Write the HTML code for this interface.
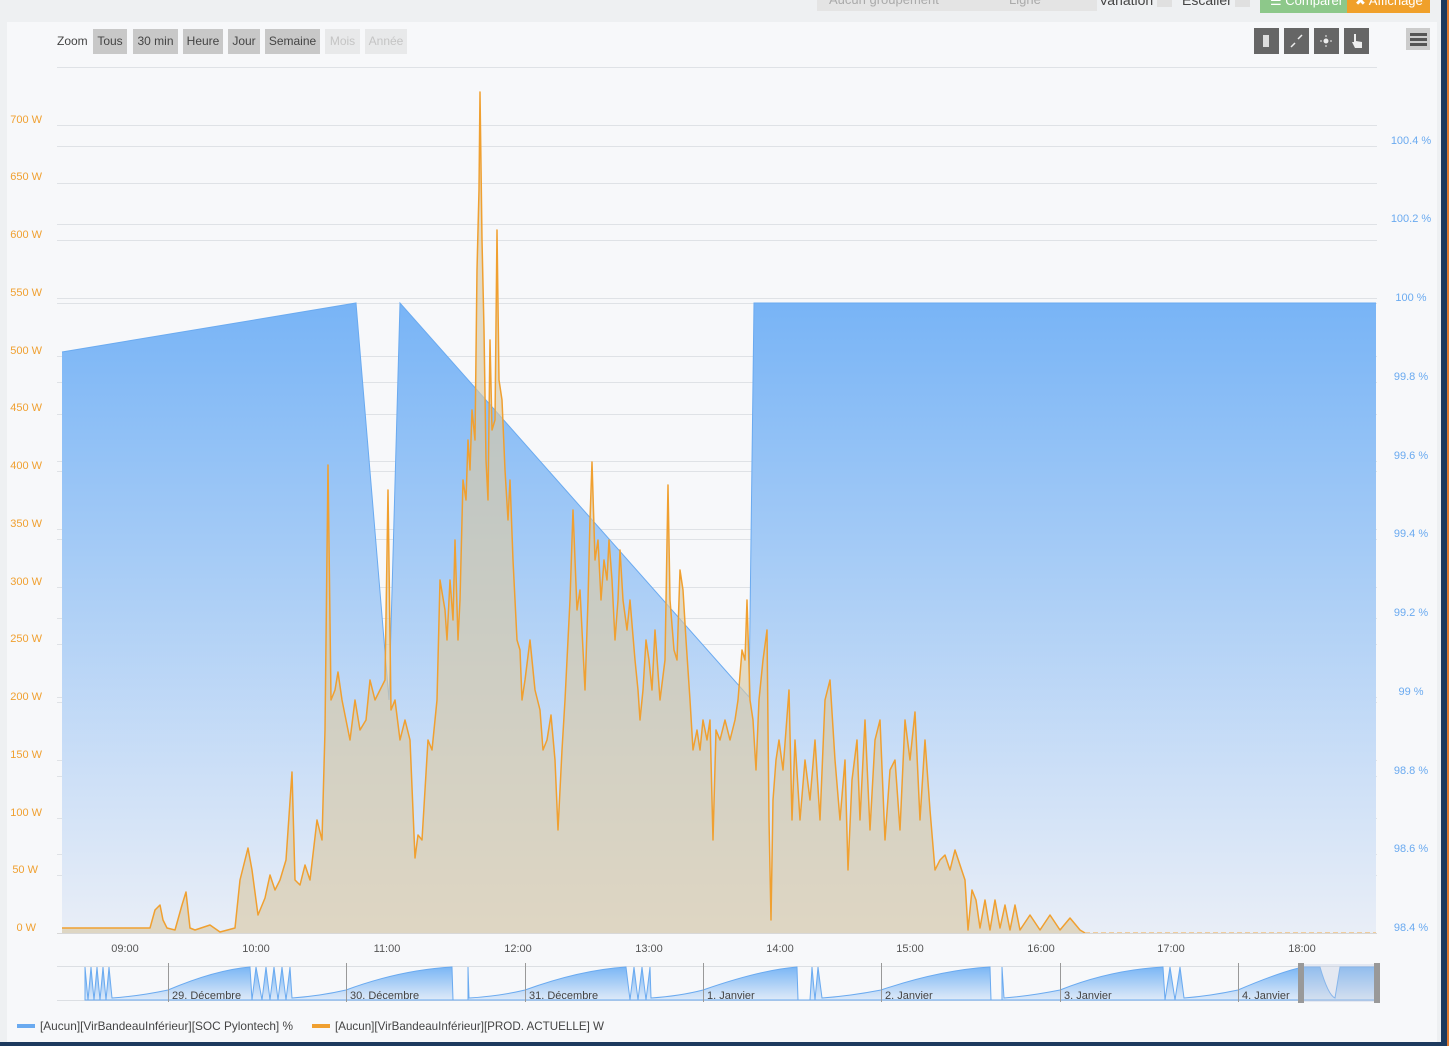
<!DOCTYPE html>
<html><head><meta charset="utf-8"><style>
html,body{margin:0;padding:0;width:1449px;height:1046px;overflow:hidden;background:#eef0f2;font-family:"Liberation Sans",sans-serif;}
.abs{position:absolute}
</style></head><body>
<div class="abs" style="left:0;top:0;width:1441px;height:1046px;background:#eef0f2"></div>
<div class="abs" style="left:1441px;top:0;width:6px;height:1046px;background:#1d3a5e"></div>
<div class="abs" style="left:1447px;top:0;width:2px;height:1046px;background:#e07a30"></div>
<div class="abs" style="left:0;top:1042px;width:1441px;height:4px;background:#1d3a5e"></div>
<div class="abs" style="left:817px;top:0;width:280px;height:11px;background:#e4e4e4;overflow:hidden;font-size:13px;color:#aaa"><span style="position:absolute;left:12px;top:-8px">Aucun groupement</span><span style="position:absolute;left:192px;top:-8px">Ligne</span></div>
<div class="abs" style="left:1099px;top:-8px;font-size:14px;color:#444">Variation</div>
<div class="abs" style="left:1157px;top:0;width:15px;height:7px;background:#e0e0e0"></div>
<div class="abs" style="left:1182px;top:-8px;font-size:14px;color:#444">Escalier</div>
<div class="abs" style="left:1235px;top:0;width:15px;height:7px;background:#e0e0e0"></div>
<div class="abs" style="left:1260px;top:0;width:87px;height:13px;background:#8dc88a;overflow:hidden;color:#fff;font-size:13px"><span style="position:absolute;left:10px;top:-7px">☰ Comparer</span></div>
<div class="abs" style="left:1347px;top:0;width:83px;height:13px;background:#f0a02a;overflow:hidden;color:#fff;font-size:13px"><span style="position:absolute;left:8px;top:-7px">✖ Affichage</span></div>
<div class="abs" style="left:7px;top:22px;width:1430px;height:1020px;background:#f7f8fa"></div>
<div class="abs" style="left:57px;top:34px;font-size:12px;color:#444">Zoom</div>
<div class="abs" style="left:93px;top:29px;height:25px;font-size:12px;color:#444;line-height:25px">
<span style="position:absolute;left:0;width:34px;background:#c8c8c8;text-align:center">Tous</span>
<span style="position:absolute;left:40px;width:45px;background:#c8c8c8;text-align:center">30 min</span>
<span style="position:absolute;left:90px;width:40px;background:#c8c8c8;text-align:center">Heure</span>
<span style="position:absolute;left:135px;width:32px;background:#c8c8c8;text-align:center">Jour</span>
<span style="position:absolute;left:172px;width:55px;background:#c8c8c8;text-align:center">Semaine</span>
<span style="position:absolute;left:232px;width:35px;background:#e8e9ea;color:#c4c4c4;text-align:center">Mois</span>
<span style="position:absolute;left:272px;width:42px;background:#e8e9ea;color:#c4c4c4;text-align:center">Année</span>
</div>
<div class="abs" style="left:1254px;top:28px;width:25px;height:26px;background:#666"></div>
<div class="abs" style="left:1284px;top:28px;width:25px;height:26px;background:#666"></div>
<div class="abs" style="left:1314px;top:28px;width:25px;height:26px;background:#666"></div>
<div class="abs" style="left:1344px;top:28px;width:25px;height:26px;background:#666"></div>
<div class="abs" style="left:1406px;top:28px;width:24px;height:22px;background:#ccc"></div>
<svg class="abs" style="left:0;top:0" width="1449" height="1046">
<g fill="#eee" stroke="#eee">
<rect x="1263" y="35" width="6" height="12" fill="#ddd" stroke="none"/>
<line x1="1291" y1="47" x2="1295" y2="43" stroke-width="1.5"/><line x1="1298" y1="39" x2="1302" y2="35" stroke-width="1.5"/>
<circle cx="1326" cy="41" r="2.5" stroke="none"/>
<g stroke-width="1"><line x1="1326" y1="35" x2="1326" y2="37"/><line x1="1326" y1="45" x2="1326" y2="47"/><line x1="1320" y1="41" x2="1322" y2="41"/><line x1="1330" y1="41" x2="1332" y2="41"/></g>
<path d="M1354 34 v8 h-2 l3 6 h7 v-6 l-6 -1 v-7 z" stroke="none"/>
</g>
<g fill="#555"><rect x="1410" y="33" width="17" height="3"/><rect x="1410" y="38" width="17" height="3"/><rect x="1410" y="43" width="17" height="3"/></g>
<defs>
<linearGradient id="bl" x1="0" y1="0" x2="0" y2="1"><stop offset="0" stop-color="#78b4f6"/><stop offset="1" stop-color="#e9eef7"/></linearGradient>
<linearGradient id="nv" x1="0" y1="0" x2="0" y2="1"><stop offset="0" stop-color="#7ab6f5"/><stop offset="1" stop-color="#dfeaf8"/></linearGradient>
</defs>
<g stroke="#dfe2e6" stroke-width="1">
<line x1="57" y1="67.5" x2="1377" y2="67.5"/>
<line x1="57" y1="125.5" x2="1377" y2="125.5"/><line x1="57" y1="183.5" x2="1377" y2="183.5"/><line x1="57" y1="240.5" x2="1377" y2="240.5"/><line x1="57" y1="298.5" x2="1377" y2="298.5"/><line x1="57" y1="356.5" x2="1377" y2="356.5"/><line x1="57" y1="414.5" x2="1377" y2="414.5"/><line x1="57" y1="471.5" x2="1377" y2="471.5"/><line x1="57" y1="529.5" x2="1377" y2="529.5"/><line x1="57" y1="587.5" x2="1377" y2="587.5"/><line x1="57" y1="644.5" x2="1377" y2="644.5"/><line x1="57" y1="702.5" x2="1377" y2="702.5"/><line x1="57" y1="760.5" x2="1377" y2="760.5"/><line x1="57" y1="818.5" x2="1377" y2="818.5"/><line x1="57" y1="875.5" x2="1377" y2="875.5"/>
<line x1="57" y1="146.5" x2="1377" y2="146.5"/><line x1="57" y1="224.5" x2="1377" y2="224.5"/><line x1="57" y1="303.5" x2="1377" y2="303.5"/><line x1="57" y1="382.5" x2="1377" y2="382.5"/><line x1="57" y1="461.5" x2="1377" y2="461.5"/><line x1="57" y1="539.5" x2="1377" y2="539.5"/><line x1="57" y1="618.5" x2="1377" y2="618.5"/><line x1="57" y1="697.5" x2="1377" y2="697.5"/><line x1="57" y1="776.5" x2="1377" y2="776.5"/><line x1="57" y1="854.5" x2="1377" y2="854.5"/>
</g>
<path d="M62 933 L62 352 L356 303 L389 700 L400 303 L749 697 L754 303 L1376 303 L1376 933 Z" fill="url(#bl)"/>
<path d="M62 352 L356 303 L389 700 L400 303 L749 697 L754 303 L1376 303" fill="none" stroke="#6aaaf0" stroke-width="1"/>
<path id="op" d="M62 928 L150 928 L155 910 L160 905 L163 920 L167 928 L175 930 L182 905 L186 892 L190 928 L195 930 L210 925 L220 932 L235 928 L240 880 L248 848 L252 870 L258 915 L265 898 L270 875 L275 890 L280 880 L286 860 L292 772 L295 880 L300 885 L305 865 L310 880 L317 820 L322 840 L325 730 L328 465 L331 700 L335 690 L338 672 L342 700 L345 715 L350 740 L355 700 L360 730 L366 720 L370 680 L375 700 L380 690 L385 680 L388 490 L391 710 L395 700 L400 740 L405 720 L410 740 L415 858 L418 835 L422 840 L428 740 L432 750 L437 700 L440 580 L445 610 L447 640 L450 580 L453 620 L455 540 L458 640 L460 600 L463 480 L466 500 L468 440 L470 470 L472 410 L475 440 L477 270 L479 190 L480 92 L482 240 L484 330 L486 460 L488 500 L490 340 L492 430 L495 420 L497 230 L499 380 L502 400 L505 470 L508 520 L510 480 L513 560 L517 640 L520 650 L522 700 L525 680 L530 640 L535 690 L540 710 L543 750 L547 740 L551 715 L555 760 L558 830 L562 750 L565 700 L570 600 L573 510 L577 610 L580 590 L583 650 L585 690 L588 600 L590 520 L592 462 L595 560 L598 540 L601 600 L604 560 L607 580 L609 540 L612 580 L615 640 L618 600 L620 550 L623 600 L627 630 L630 600 L635 660 L638 690 L640 720 L643 690 L646 640 L649 660 L652 690 L655 630 L660 700 L665 660 L668 485 L670 600 L674 650 L677 660 L680 570 L683 590 L686 640 L690 700 L693 750 L697 730 L700 750 L703 720 L707 740 L710 720 L713 840 L716 730 L720 740 L725 720 L730 740 L735 720 L738 700 L742 650 L745 660 L747 600 L750 700 L753 720 L756 770 L759 700 L763 660 L767 630 L769 820 L771 920 L773 800 L776 760 L779 740 L783 770 L786 730 L789 690 L792 820 L795 740 L800 820 L805 760 L810 800 L815 740 L820 820 L825 700 L830 680 L835 760 L840 820 L845 760 L848 870 L852 780 L857 740 L860 820 L865 720 L870 830 L875 740 L880 720 L885 840 L890 770 L895 760 L900 830 L905 720 L910 760 L915 712 L920 820 L925 740 L930 810 L935 870 L940 860 L945 855 L950 870 L955 850 L960 865 L965 880 L968 930 L972 890 L976 900 L980 928 L985 900 L990 930 L995 900 L1000 928 L1005 905 L1010 930 L1015 905 L1020 930 L1030 915 L1040 930 L1050 915 L1060 930 L1070 918 L1080 930 L1085 933" fill="none"/>
<path d="M62 933 L62 928 L150 928 L155 910 L160 905 L163 920 L167 928 L175 930 L182 905 L186 892 L190 928 L195 930 L210 925 L220 932 L235 928 L240 880 L248 848 L252 870 L258 915 L265 898 L270 875 L275 890 L280 880 L286 860 L292 772 L295 880 L300 885 L305 865 L310 880 L317 820 L322 840 L325 730 L328 465 L331 700 L335 690 L338 672 L342 700 L345 715 L350 740 L355 700 L360 730 L366 720 L370 680 L375 700 L380 690 L385 680 L388 490 L391 710 L395 700 L400 740 L405 720 L410 740 L415 858 L418 835 L422 840 L428 740 L432 750 L437 700 L440 580 L445 610 L447 640 L450 580 L453 620 L455 540 L458 640 L460 600 L463 480 L466 500 L468 440 L470 470 L472 410 L475 440 L477 270 L479 190 L480 92 L482 240 L484 330 L486 460 L488 500 L490 340 L492 430 L495 420 L497 230 L499 380 L502 400 L505 470 L508 520 L510 480 L513 560 L517 640 L520 650 L522 700 L525 680 L530 640 L535 690 L540 710 L543 750 L547 740 L551 715 L555 760 L558 830 L562 750 L565 700 L570 600 L573 510 L577 610 L580 590 L583 650 L585 690 L588 600 L590 520 L592 462 L595 560 L598 540 L601 600 L604 560 L607 580 L609 540 L612 580 L615 640 L618 600 L620 550 L623 600 L627 630 L630 600 L635 660 L638 690 L640 720 L643 690 L646 640 L649 660 L652 690 L655 630 L660 700 L665 660 L668 485 L670 600 L674 650 L677 660 L680 570 L683 590 L686 640 L690 700 L693 750 L697 730 L700 750 L703 720 L707 740 L710 720 L713 840 L716 730 L720 740 L725 720 L730 740 L735 720 L738 700 L742 650 L745 660 L747 600 L750 700 L753 720 L756 770 L759 700 L763 660 L767 630 L769 820 L771 920 L773 800 L776 760 L779 740 L783 770 L786 730 L789 690 L792 820 L795 740 L800 820 L805 760 L810 800 L815 740 L820 820 L825 700 L830 680 L835 760 L840 820 L845 760 L848 870 L852 780 L857 740 L860 820 L865 720 L870 830 L875 740 L880 720 L885 840 L890 770 L895 760 L900 830 L905 720 L910 760 L915 712 L920 820 L925 740 L930 810 L935 870 L940 860 L945 855 L950 870 L955 850 L960 865 L965 880 L968 930 L972 890 L976 900 L980 928 L985 900 L990 930 L995 900 L1000 928 L1005 905 L1010 930 L1015 905 L1020 930 L1030 915 L1040 930 L1050 915 L1060 930 L1070 918 L1080 930 L1085 933 Z" fill="#d9c9a8" fill-opacity="0.65"/>
<use href="#op" stroke="#f0a030" stroke-width="1.5" stroke-linejoin="round"/>
<line x1="1085" y1="933" x2="1376" y2="933" stroke="#f0c080" stroke-width="1.5" stroke-dasharray="5,3"/>
<line x1="57" y1="933.5" x2="1377" y2="933.5" stroke="#d8d8d8"/>
<g font-size="11" fill="#f0a030" text-anchor="end" font-family="Liberation Sans, sans-serif">
<text x="42" y="123">700 W</text><text x="42" y="180">650 W</text><text x="42" y="238">600 W</text><text x="42" y="296">550 W</text><text x="42" y="354">500 W</text><text x="42" y="411">450 W</text><text x="42" y="469">400 W</text><text x="42" y="527">350 W</text><text x="42" y="585">300 W</text><text x="42" y="642">250 W</text><text x="42" y="700">200 W</text><text x="42" y="758">150 W</text><text x="42" y="816">100 W</text><text x="38" y="873">50 W</text><text x="36" y="931">0 W</text>
</g>
<g font-size="11" fill="#6aaaf0" text-anchor="middle" font-family="Liberation Sans, sans-serif">
<text x="1411" y="144">100.4 %</text><text x="1411" y="222">100.2 %</text><text x="1411" y="301">100 %</text><text x="1411" y="380">99.8 %</text><text x="1411" y="459">99.6 %</text><text x="1411" y="537">99.4 %</text><text x="1411" y="616">99.2 %</text><text x="1411" y="695">99 %</text><text x="1411" y="774">98.8 %</text><text x="1411" y="852">98.6 %</text><text x="1411" y="931">98.4 %</text>
</g>
<g font-size="11" fill="#555" text-anchor="middle" font-family="Liberation Sans, sans-serif">
<text x="125" y="952">09:00</text><text x="256" y="952">10:00</text><text x="387" y="952">11:00</text><text x="518" y="952">12:00</text><text x="649" y="952">13:00</text><text x="780" y="952">14:00</text><text x="910" y="952">15:00</text><text x="1041" y="952">16:00</text><text x="1171" y="952">17:00</text><text x="1302" y="952">18:00</text>
</g>
<line x1="57" y1="966.5" x2="1379" y2="966.5" stroke="#dcdfe3"/>
<line x1="57" y1="1000.5" x2="1379" y2="1000.5" stroke="#dcdfe3"/>
<path d="M85 1000 L85 967 L88 1000 L91 967 L94 1000 L97 967 L100 1000 L103 967 L106 1000 L109 967 L112 998 Q140 996 168 990 Q215 970 250 967 L252 1000 L256 967 L262 1000 L266 967 L270 1000 L274 967 L278 1000 L282 967 L286 1000 L290 967 L292 998 Q320 996 346 990 Q400 970 452 967 L453 1000 L468 1000 L468 967 L469 998 Q500 996 525 990 Q580 970 626 967 L630 1000 L634 967 L638 1000 L642 967 L646 1000 L650 967 L651 998 Q680 996 703 990 Q760 970 797 967 L798 1000 L810 1000 L812 967 L815 1000 L818 967 L822 998 Q850 996 881 990 Q940 970 990 967 L991 1000 L1002 1000 L1002 967 L1004 998 Q1030 996 1060 990 Q1110 970 1163 967 L1165 1000 L1170 967 L1175 1000 L1180 967 L1184 998 Q1210 996 1238 990 Q1280 972 1303 967 L1320 967 Q1328 995 1335 998 L1340 967 L1376 967 L1376 1000 Z" fill="url(#nv)" stroke="#6aaaf0" stroke-width="1"/>
<rect x="1302" y="964" width="75" height="38" fill="#c0cce0" fill-opacity="0.35"/>
<rect x="1298" y="963" width="6" height="40" fill="#999"/>
<rect x="1374" y="963" width="6" height="40" fill="#999"/>
<g stroke="#999"><line x1="168.5" y1="963" x2="168.5" y2="1002"/><line x1="346.5" y1="963" x2="346.5" y2="1002"/><line x1="525.5" y1="963" x2="525.5" y2="1002"/><line x1="703.5" y1="963" x2="703.5" y2="1002"/><line x1="881.5" y1="963" x2="881.5" y2="1002"/><line x1="1060.5" y1="963" x2="1060.5" y2="1002"/><line x1="1238.5" y1="963" x2="1238.5" y2="1002"/></g>
<g font-size="11" fill="#444" font-family="Liberation Sans, sans-serif">
<text x="172" y="999">29. Décembre</text><text x="350" y="999">30. Décembre</text><text x="529" y="999">31. Décembre</text><text x="707" y="999">1. Janvier</text><text x="885" y="999">2. Janvier</text><text x="1064" y="999">3. Janvier</text><text x="1242" y="999">4. Janvier</text>
</g>
<rect x="17" y="1024" width="18" height="4" fill="#6aaaf0"/>
<rect x="312" y="1024" width="18" height="4" fill="#f0a030"/>
<g font-size="12" fill="#444" font-family="Liberation Sans, sans-serif">
<text x="40" y="1030" textLength="253" lengthAdjust="spacingAndGlyphs">[Aucun][VirBandeauInférieur][SOC Pylontech] %</text>
<text x="335" y="1030" textLength="269" lengthAdjust="spacingAndGlyphs">[Aucun][VirBandeauInférieur][PROD. ACTUELLE] W</text>
</g>
</svg>
</body></html>
